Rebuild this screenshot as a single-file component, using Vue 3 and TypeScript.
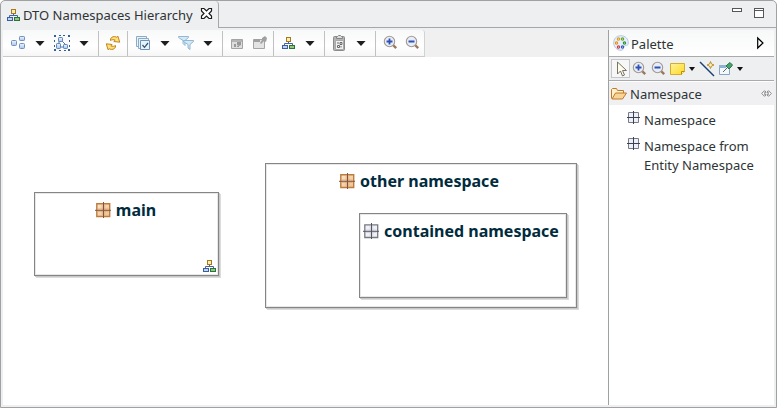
<script setup lang="ts">
interface Tool {
  kind: 'icon' | 'arrow' | 'sep'
  name?: string
  label?: string
  gap: number
}

const tools: Tool[] = [
  { kind: 'icon', name: 'arrange', label: 'Arrange', gap: 7 },
  { kind: 'arrow', gap: 9 },
  { kind: 'icon', name: 'select', label: 'Select', gap: 9 },
  { kind: 'arrow', gap: 9 },
  { kind: 'sep', gap: 9 },
  { kind: 'icon', name: 'refresh', label: 'Refresh', gap: 6 },
  { kind: 'sep', gap: 6 },
  { kind: 'icon', name: 'layers', label: 'Layers', gap: 7 },
  { kind: 'arrow', gap: 9 },
  { kind: 'icon', name: 'filter', label: 'Filters', gap: 8 },
  { kind: 'arrow', gap: 9 },
  { kind: 'sep', gap: 9 },
  { kind: 'icon', name: 'pinned', label: 'Pin', gap: 6 },
  { kind: 'icon', name: 'unpinned', label: 'Unpin', gap: 7 },
  { kind: 'sep', gap: 5 },
  { kind: 'icon', name: 'tree', label: 'Diagram', gap: 7 },
  { kind: 'arrow', gap: 8 },
  { kind: 'sep', gap: 9 },
  { kind: 'icon', name: 'paste', label: 'Paste', gap: 7 },
  { kind: 'arrow', gap: 8 },
  { kind: 'sep', gap: 9 },
  { kind: 'icon', name: 'zoomin', label: 'Zoom in', gap: 7 },
  { kind: 'icon', name: 'zoomout', label: 'Zoom out', gap: 6 },
]

const entries: string[][] = [['Namespace'], ['Namespace from', 'Entity Namespace']]
</script>

<template>
  <div class="window">
    <svg class="defs" aria-hidden="true">
      <linearGradient id="g-blue" x1="0" y1="0" x2="0" y2="1">
        <stop offset="0" stop-color="#eef6ff" /><stop offset="1" stop-color="#a9c6ea" />
      </linearGradient>
      <linearGradient id="g-tan" x1="0" y1="0" x2="1" y2="1">
        <stop offset="0" stop-color="#fbe6c8" /><stop offset="1" stop-color="#ecc090" />
      </linearGradient>
      <linearGradient id="g-note" x1="0" y1="0" x2="1" y2="1">
        <stop offset="0" stop-color="#fff3a0" /><stop offset="1" stop-color="#ffd91c" />
      </linearGradient>
      <symbol id="tree" viewBox="0 0 16 16">
        <path d="M7.500 6v3M3.500 10.500v-2h8v2" fill="none" stroke="#4064a4" />
        <rect x="5.500" y="2.500" width="4" height="4" fill="#fbeeb0" stroke="#a9781c" />
        <rect x="1.500" y="10.500" width="5" height="3" fill="#bed4f3" stroke="#3d5d9f" />
        <rect x="8.500" y="10.500" width="5" height="3" fill="#96c774" stroke="#277442" />
      </symbol>
      <symbol id="arrange" viewBox="0 0 16 16">
        <g fill="url(#g-blue)" stroke="#7190bd">
          <rect x="1.500" y="5.500" width="5" height="5" rx="1" />
          <rect x="9.500" y="1.500" width="5" height="4" rx=".7" />
          <rect x="9.500" y="8.500" width="5" height="5" rx="1" />
        </g>
      </symbol>
      <symbol id="select" viewBox="0 0 16 16">
        <path d="M6 4l7 7M5 5v5M6 12h4" stroke="#5478a8" fill="none" />
        <g fill="url(#g-blue)" stroke="#6185b8">
          <rect x="4.500" y="2.500" width="4" height="4" rx=".7" />
          <rect x="2.500" y="8.500" width="4" height="5" rx=".7" />
          <rect x="9.500" y="9.500" width="4" height="4" rx=".7" />
        </g>
        <path
          d="M0 0h2v2H0zM5 0h2v1H5zM9 0h2v1H9zM14 0h2v2h-2zM0 5h1v2H0zM0 10h1v2H0zM15 5h1v2h-1zM15 10h1v2h-1zM0 14h2v2H0zM5 15h2v1H5zM10 15h2v1h-2zM14 14h2v2h-2z"
          fill="#315f9c"
        />
      </symbol>
      <symbol id="refresh" viewBox="0 0 16 16">
        <g fill="#ffe07a" stroke="#bd7f18" stroke-width=".95" stroke-linejoin="round">
          <path d="M5.500 5.500V4C6.500 1.700 9 .9 11.800 2.200L13 1.300l1.700 5.900-5.900-.7 1.400-1.300C8.600 4.500 7 4.500 5.500 5.500z" />
          <path d="M10.500 10.500V12c-1 2.300-3.500 3.100-6.300 1.800L3 14.700 1.300 8.800l5.900.7-1.400 1.300c1.600.7 3.200.7 4.700-.3z" />
        </g>
      </symbol>
      <symbol id="layers" viewBox="0 0 16 16">
        <g fill="#e5f4fa" stroke="#8dabc4">
          <path d="M1.500 1.500h10v10h-10z" />
          <path d="M3.500 3.500h10v10h-10z" />
          <path d="M5.500 5.500h9v9h-9z" stroke="#7190b5" />
        </g>
        <path d="M7.500 10l2 2.300L13 8" fill="none" stroke="#34506b" stroke-width="1.200" />
      </symbol>
      <symbol id="filter" viewBox="0 0 16 16">
        <g fill="#d2e9f6" stroke="#8ab1cf" stroke-width=".9">
          <path d="M.5 1.500h10v1L7 5.500v5l-2-2v-3L.5 2.500z" />
          <path d="M5.500 5.500h10v1L12 9.500v5l-2-1.500V9.500l-4.500-3z" />
        </g>
      </symbol>
      <symbol id="pinned" viewBox="0 0 16 16">
        <path d="M2.500 4.500h11v9h-11z" fill="#dedede" stroke="#a4a4a4" />
        <path d="M3 5h10v2H3z" fill="#b4b4b4" />
        <path d="M8 7h4v3l-2 1-2-1zM5 9h2v3H5zM8 11h2v1H8z" fill="#999" />
      </symbol>
      <symbol id="unpinned" viewBox="0 0 16 16">
        <path d="M1.500 4.500h11v9h-11z" fill="#e3e3e3" stroke="#a5a5a5" />
        <path d="M2 4h6v3H2z" fill="#a0a0a0" />
        <path d="M10 3l3-2 2 2-1 4-2-1-3 3-1-1 2-3z" fill="#a0a0a0" />
      </symbol>
      <symbol id="paste" viewBox="0 0 16 16">
        <rect x="1.500" y="1.500" width="11" height="14" rx="1" fill="#b4b4b4" stroke="#8b8b8b" />
        <path d="M4.500 3.500v-2h1l1-1h2l1 1h1v2z" fill="#ddd" stroke="#858585" />
        <path d="M3.500 5.500h8v9h-8z" fill="#f2f2f2" stroke="#aaa" />
        <path d="M5.500 10.500h2v2h-2zM8 7.500h2v2H8zM5 8h2M9 11v1.500" fill="none" stroke="#686868" />
      </symbol>
      <symbol id="lens" viewBox="0 0 16 16">
        <path d="M10 10l3.200 3.200" stroke="#9b7759" stroke-width="2.400" />
        <circle cx="6.500" cy="6.500" r="5.200" fill="#e7edfc" stroke="#a49a8d" stroke-width="1.100" />
      </symbol>
      <symbol id="zoomin" viewBox="0 0 16 16">
        <use href="#lens" />
        <path d="M3.500 6.500h6M6.500 3.500v6" stroke="#3050b0" stroke-width="1.800" />
      </symbol>
      <symbol id="zoomout" viewBox="0 0 16 16">
        <use href="#lens" />
        <path d="M3.500 6.500h6" stroke="#3050b0" stroke-width="1.800" />
      </symbol>
      <symbol id="grid" viewBox="0 0 16 16">
        <path d="M1.800 1.800h12.900v12.700H1.800z" fill="#eef0fa" stroke="#77797f" stroke-width="1.300" />
        <path d="M3 7h10.500M3 9.500h10.500M7.200 3v10.500M9.800 3v10.500" stroke="#c9cbd4" stroke-width=".7" />
        <path d="M8.500 0v16M0 8.300h16.500" stroke="#55565c" />
      </symbol>
      <symbol id="gridsmall" viewBox="0 0 13 13">
        <path d="M1.500 1.500h10v10h-10z" fill="#edf0fa" stroke="#777a88" />
        <path d="M6.500 0v13M0 6.500h13" stroke="#3f414b" />
      </symbol>
      <symbol id="gridtan" viewBox="0 0 16 16">
        <path d="M1.800 1.800h12.900v12.700H1.800z" fill="url(#g-tan)" stroke="#bd7c3e" stroke-width="1.400" />
        <path d="M3 7h10.500M3 9.500h10.500M7.200 3v10.500M9.800 3v10.500" stroke="#dca874" stroke-width=".7" />
        <path d="M8.500 0v16M0 8.300h16.500" stroke="#81533f" />
      </symbol>
      <symbol id="palette" viewBox="0 0 16 16">
        <path d="M8 .7C3 .7.700 4 .700 8S4 15.300 8 15.300c3 0 2-3 3.500-4.300 1.300-1 3.800 0 3.800-3C15.300 4 12.500.700 8 .700z" fill="#e6effb" stroke="#b4c7e3" />
        <g fill="#fff" stroke-width="1.200">
          <circle cx="5.500" cy="4" r="1.100" stroke="#dda318" />
          <circle cx="9.500" cy="4" r="1.100" stroke="#6aa323" />
          <circle cx="3.500" cy="8" r="1.100" stroke="#ed9017" />
          <circle cx="11.500" cy="8" r="1.100" stroke="#29952c" />
          <circle cx="5.500" cy="12" r="1.100" stroke="#cf414b" />
          <circle cx="9.500" cy="12" r="1.100" stroke="#375dbb" />
        </g>
      </symbol>
      <symbol id="cursor" viewBox="0 0 16 16">
        <path d="M4.500 1v12l3-3 2 5 2-1-2-4.500h4z" fill="#fffde9" stroke="#77736a" />
      </symbol>
      <symbol id="note" viewBox="0 0 16 16">
        <path d="M.5 2.500h14v8l-3 3H.500z" fill="url(#g-note)" stroke="#d2ae2c" />
        <path d="M11.500 13.500v-3h3" fill="#fff2a4" stroke="#b88b14" />
      </symbol>
      <symbol id="connection" viewBox="0 0 16 16">
        <path d="M1 1l14 14" stroke="#173f79" stroke-width="1.400" />
        <path d="M11.500.500l1 2.500 2.500 1-2.500 1-1 2.500-1-2.500-2.500-1 2.500-1z" fill="#fff2ba" stroke="#b58628" stroke-width=".9" />
      </symbol>
      <symbol id="pin" viewBox="0 0 16 16">
        <path d="M1.500 4.500h10v9h-10z" fill="#f2f8fc" stroke="#8ba5c0" />
        <path d="M1 4h7v3H1z" fill="#8fb2d3" />
        <path d="M5 11l4-4" stroke="#596b63" />
        <path d="M9 4l3-2.500L14.500 4l-1.500 2-2 2-3-3z" fill="#48a269" stroke="#287747" />
      </symbol>
      <symbol id="folder" viewBox="0 0 16 16">
        <path d="M.5 12.500v-9l1-1h4l1 2h6v3" fill="#fff0c9" stroke="#bd7a2a" />
        <path d="M1 13l3.500-6h11l-4 6z" fill="#f8d597" stroke="#bd7a2a" stroke-linejoin="round" />
      </symbol>
    </svg>

    <header class="tabs">
      <div class="tab">
        <svg class="icon"><use href="#tree" /></svg>
        <span>DTO Namespaces Hierarchy</span>
        <svg class="close" viewBox="0 0 11 11">
          <path d="M.5.500h2.500L5.500 3 8 .5h2.500V3L8 5.500 10.500 8v2.500H8L5.500 8 3 10.500H.5V8L3 5.500.5 3z" fill="#fff" stroke="#1c1c1c" stroke-width="1.200" />
        </svg>
      </div>
      <div class="controls">
        <i class="minimize"></i>
        <i class="maximize"></i>
      </div>
    </header>

    <div class="body">
      <main class="editor">
        <div class="toolbar-row">
          <nav class="toolbar">
            <span
              v-for="(tool, index) in tools"
              :key="index"
              :class="tool.kind"
              :style="{ marginLeft: `${tool.gap}px` }"
            >
              <svg v-if="tool.kind === 'icon'" class="icon" :aria-label="tool.label">
                <use :href="`#${tool.name}`" />
              </svg>
            </span>
          </nav>
        </div>
        <section class="canvas">
          <div class="node node-main">
            <div class="title"><svg class="icon"><use href="#gridtan" /></svg><span>main</span></div>
            <svg class="icon badge"><use href="#tree" /></svg>
          </div>
          <div class="node node-other">
            <div class="title"><svg class="icon"><use href="#gridtan" /></svg><span>other namespace</span></div>
            <div class="node node-contained">
              <div class="title"><svg class="icon"><use href="#grid" /></svg><span>contained namespace</span></div>
            </div>
          </div>
        </section>
      </main>

      <aside class="palette">
        <div class="palette-head">
          <svg class="icon"><use href="#palette" /></svg>
          <span>Palette</span>
          <svg class="expand" viewBox="0 0 7 12"><path d="M.7 1v10l5.300-5z" fill="#fff" stroke="#000" stroke-width="1.200" /></svg>
        </div>
        <div class="palette-tools">
          <span class="pressed"><svg class="icon"><use href="#cursor" /></svg></span>
          <svg class="icon"><use href="#zoomin" /></svg>
          <svg class="icon zoomout"><use href="#zoomout" /></svg>
          <svg class="icon notes"><use href="#note" /></svg>
          <i class="small-arrow"></i>
          <svg class="icon link"><use href="#connection" /></svg>
          <svg class="icon pins"><use href="#pin" /></svg>
          <i class="small-arrow"></i>
        </div>
        <div class="drawer">
          <svg class="icon"><use href="#folder" /></svg>
          <span>Namespace</span>
          <svg class="drawer-pin" viewBox="0 0 11 7">
            <path d="M3.500.700L.7 3.500l2.800 2.800L5 4.800H3.800V2.200H5zM7.500.700l2.800 2.800-2.800 2.800L6 4.800h1.200V2.200H6z" fill="#fff" stroke="#777" stroke-width=".9" />
          </svg>
        </div>
        <ul class="entries">
          <li v-for="(lines, index) in entries" :key="index">
            <svg class="entry-icon"><use href="#gridsmall" /></svg>
            <div><div v-for="line in lines" :key="line">{{ line }}</div></div>
          </li>
        </ul>
      </aside>
    </div>
  </div>
</template>

<style>
body {
  background: #fff;
}
</style>

<style scoped>
* {
  box-sizing: border-box;
}
.window {
  width: 777px;
  height: 408px;
  display: flex;
  flex-direction: column;
  border: 1px solid #a0a1a3;
  border-radius: 5px 5px 0 0;
  background: #eeeff1;
  font: 13px/19px "Noto Sans", sans-serif;
  color: #2e3436;
  overflow: hidden;
}
.defs {
  position: absolute;
  width: 0;
  height: 0;
}
.icon {
  display: block;
  width: 16px;
  height: 16px;
  flex: none;
  overflow: visible;
}
.tabs {
  display: flex;
  height: 27px;
  flex: none;
}
.tab {
  display: flex;
  align-items: center;
  width: 218px;
  padding: 1px 0 0 5px;
  border-right: 1px solid #a6a7a9;
  border-radius: 0 4px 0 0;
  white-space: nowrap;
}
.tab span {
  width: 169px;
  margin-left: 1px;
}
.close {
  width: 11px;
  height: 11px;
  margin: -3px 0 0 9px;
  overflow: visible;
}
.controls {
  flex: 1;
  display: flex;
  justify-content: flex-end;
  gap: 12px;
  padding: 7px 12px 0 0;
  border-bottom: 1px solid #a6a7a9;
}
.minimize {
  width: 10px;
  height: 4px;
  border: 1px solid #55575a;
  background: #fff;
}
.maximize {
  width: 10px;
  height: 10px;
  border: 1px solid #55575a;
  background: linear-gradient(#fff 1px, #55575a 1px, #55575a 2px, #fff 2px);
}
.body {
  flex: 1;
  display: flex;
  padding: 2px;
  min-height: 0;
}
.editor {
  width: 605px;
  display: flex;
  flex-direction: column;
}
.toolbar-row {
  height: 27px;
  flex: none;
  background: #f0f0f1;
}
.toolbar {
  width: 422px;
  height: 27px;
  display: flex;
  align-items: center;
  background: linear-gradient(#f7f8f8, #fff 60%, #f6f6f6);
  border-bottom: 1px solid #cacaca;
  border-right: 1px solid #d1d2d3;
  border-radius: 0 3px 0 0;
}
.toolbar > span {
  flex: none;
}
.arrow {
  width: 10px;
  height: 5px;
  background: #1d1f21;
  clip-path: polygon(0 0, 100% 0, 50% 110%);
}
.sep {
  width: 1px;
  height: 25px;
  background: #c1c1c2;
}
.canvas {
  flex: 1;
  position: relative;
  background: #fff;
}
.node {
  position: absolute;
  border: 1px solid #858585;
  background: #fff;
  box-shadow: inset 0 0 0 1px #e8e8e8, 1px 1px 0 #c8c8c8, 2px 2px 0 #dcdcdc;
}
.node-main {
  left: 31px;
  top: 135px;
  width: 185px;
  height: 84px;
  padding: 6px 2px 0 0;
}
.node-other {
  left: 262px;
  top: 106px;
  width: 312px;
  height: 145px;
  padding: 6px 4px 0 0;
}
.node-contained {
  left: 93px;
  top: 49px;
  width: 208px;
  height: 85px;
  padding: 6px 4px 0 0;
}
.title {
  display: flex;
  justify-content: center;
  align-items: center;
  gap: 5px;
  height: 22px;
  font-size: 16px;
  font-weight: 700;
  color: #002b3d;
  white-space: nowrap;
}
.badge {
  position: absolute;
  right: 0;
  bottom: 1px;
}
.palette {
  flex: 1;
  border-left: 1px solid #9fa0a2;
  background: #fff;
}
.palette-head {
  display: flex;
  align-items: center;
  height: 27px;
  padding-left: 4px;
  background: linear-gradient(#f7f8f8, #fff);
  border-bottom: 1px solid #a9aaac;
}
.palette-head span {
  margin: 2px 0 0 2px;
}
.expand {
  width: 7px;
  height: 12px;
  margin: 0 10px 0 auto;
  overflow: visible;
}
.palette-tools {
  display: flex;
  align-items: center;
  height: 24px;
  padding-left: 2px;
  background: #eeeff1;
  border-bottom: 1px solid #a9aaac;
}
.pressed {
  width: 19px;
  height: 19px;
  padding: 1px;
  margin-right: 2px;
  border: 1px solid #c6c6c8;
  background: #f7f7f8;
}
.zoomout {
  margin-left: 3px;
}
.notes {
  margin-left: 3px;
}
.small-arrow {
  width: 6px;
  height: 4px;
  margin: 1px 0 0 3px;
  background: #111;
  clip-path: polygon(0 0, 100% 0, 50% 100%);
}
.link {
  margin-left: 4px;
}
.pins {
  margin-left: 3px;
}
.drawer {
  display: flex;
  align-items: center;
  height: 24px;
  padding: 1px 2px 0 2px;
  background: #f0f0f2;
  border-top: 1px solid #fff;
}
.drawer span {
  margin-left: 3px;
}
.drawer-pin {
  width: 11px;
  height: 7px;
  margin: -2px 0 0 auto;
}
.entries {
  list-style: none;
  margin: 0;
  padding: 6px 0 0 18px;
}
.entries li {
  display: flex;
  margin-bottom: 7px;
}
.entry-icon {
  width: 13px;
  height: 13px;
  margin-right: 4px;
}
</style>
